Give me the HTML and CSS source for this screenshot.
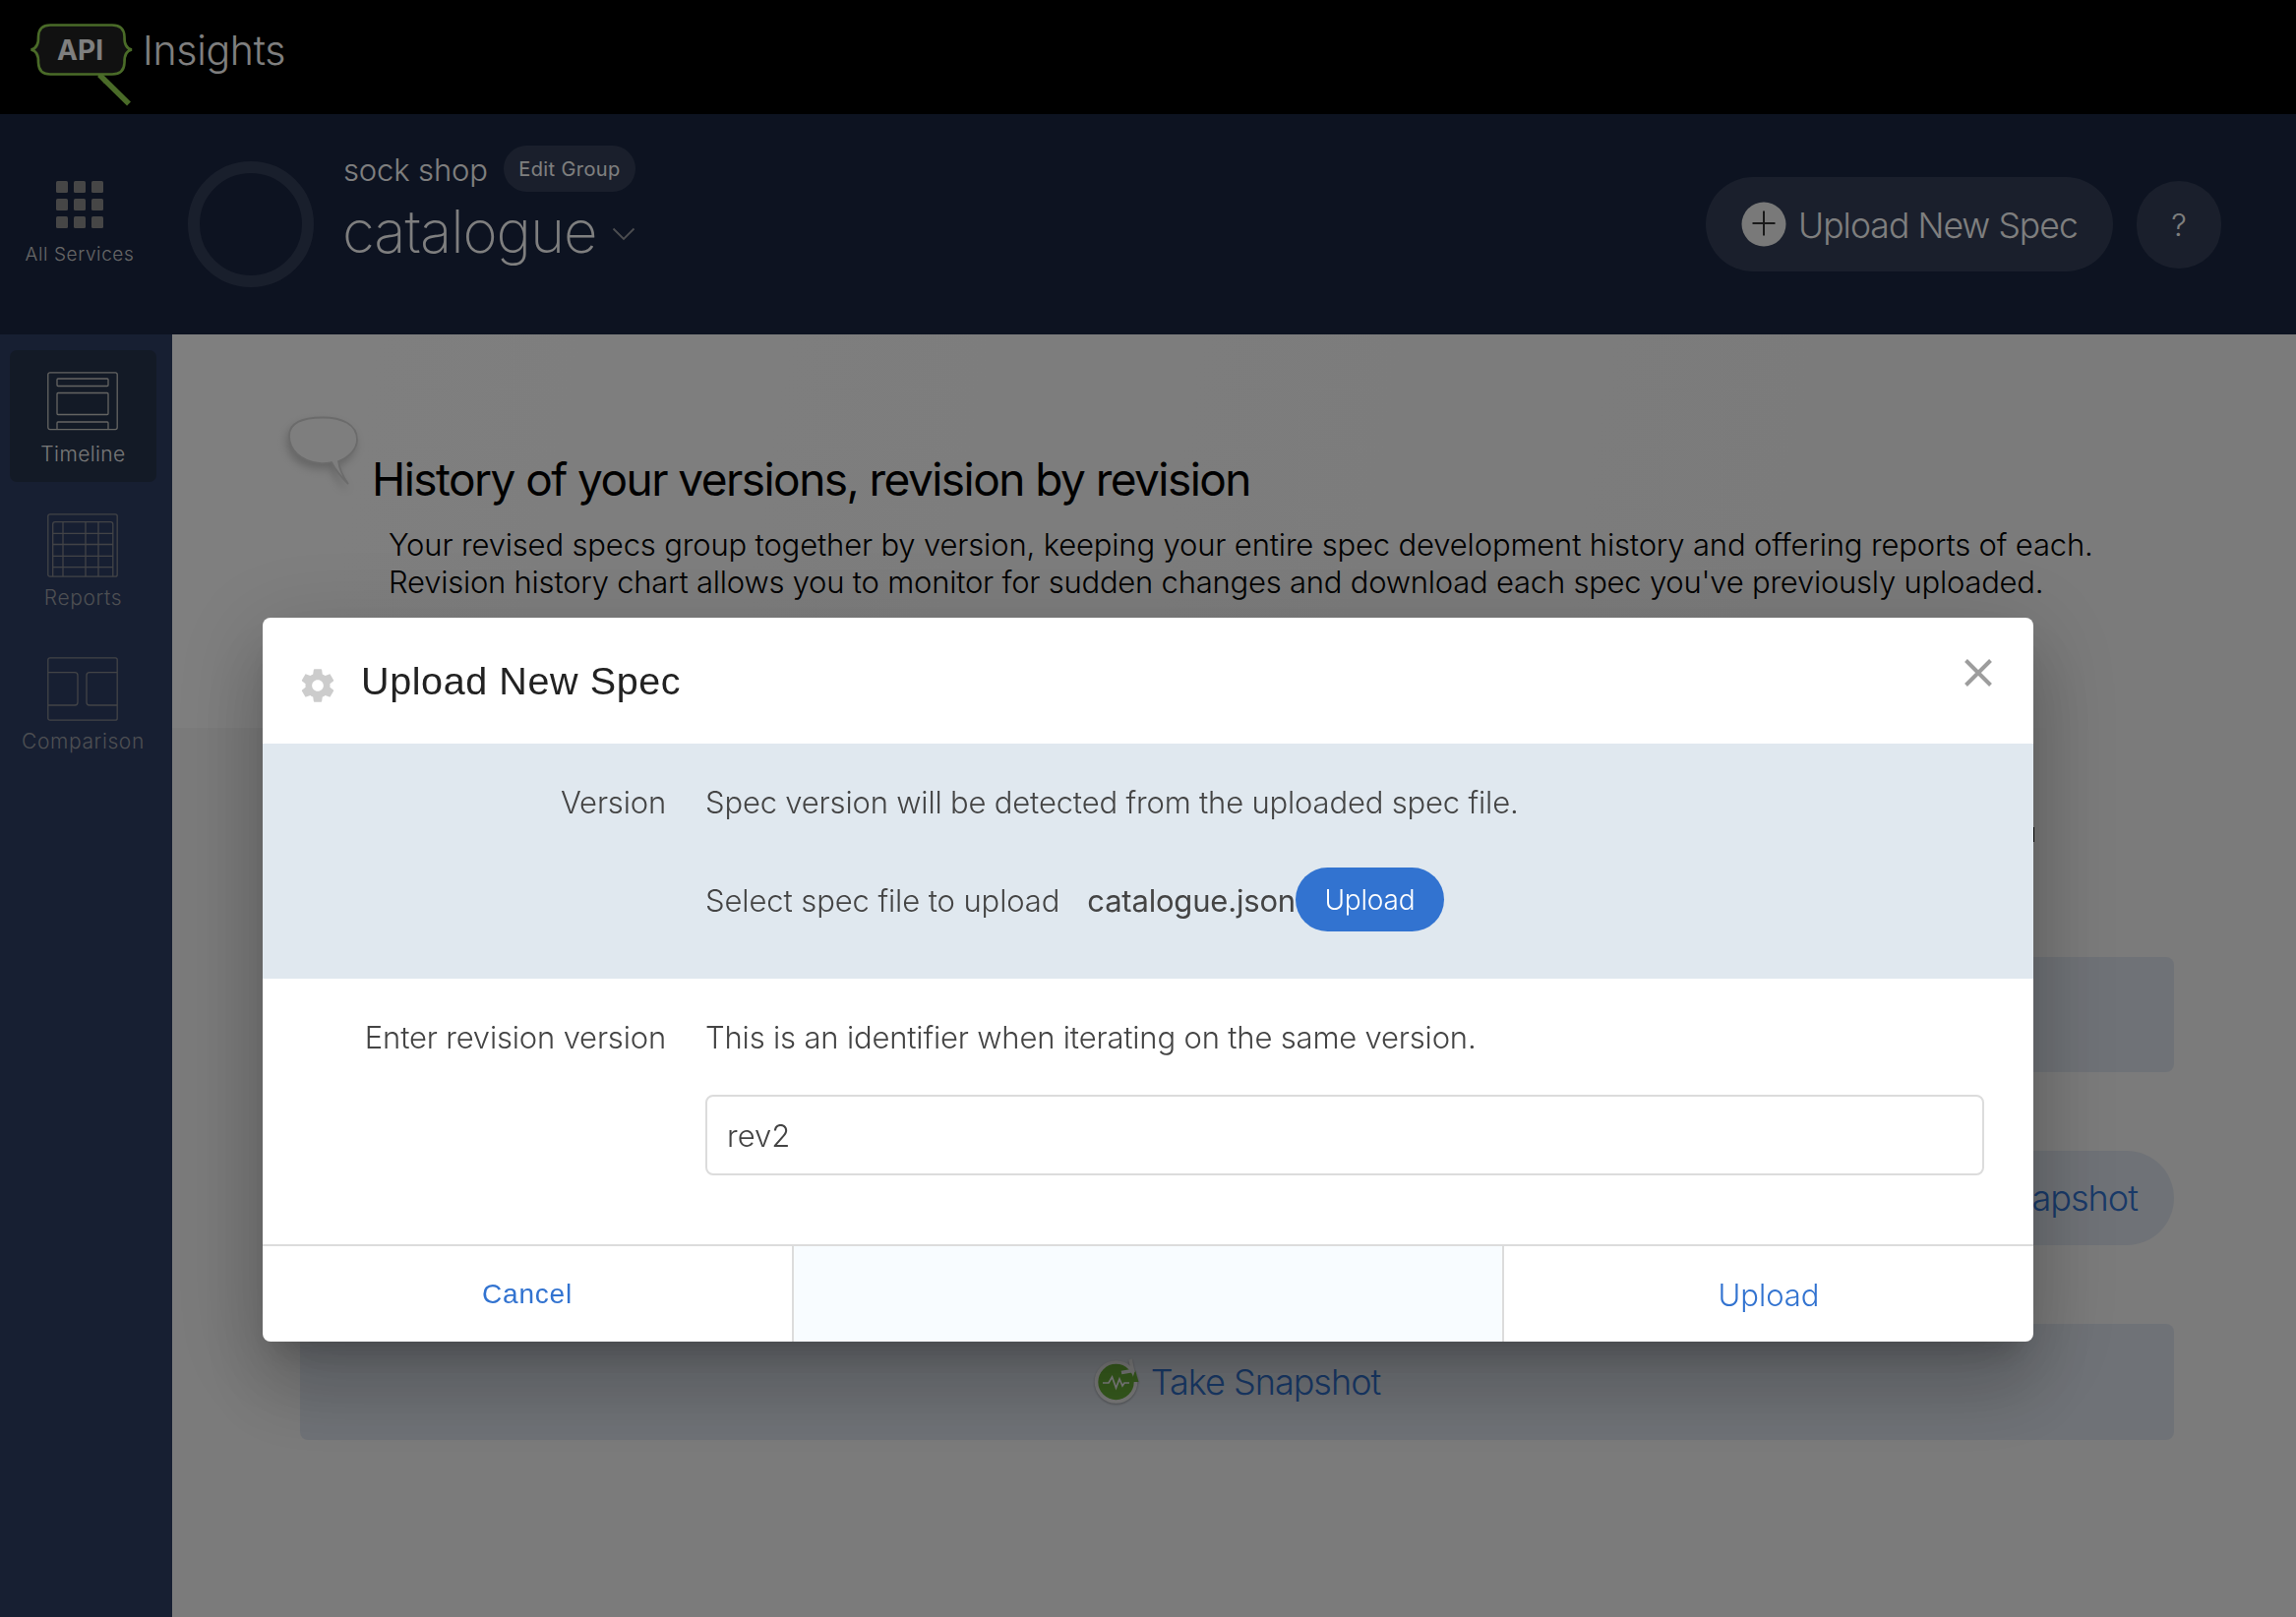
FILE: index.html
```html
<!DOCTYPE html>
<html lang="en">
<head>
<meta charset="utf-8">
<title>API Insights</title>
<link rel="stylesheet" href="styles.css">
</head>
<body>
<div class="app">
  <header class="topbar">
    <svg class="logo" width="106" height="86" viewBox="0 0 106 86">
      <path d="M71 52 L101 81.500" stroke="#94d750" stroke-width="5.500" fill="none"/>
      <path d="M68 50 L79 58 L76 61 Z" fill="#94d750"/>
      <path d="M21 1.500 H84 Q96 1.500 96.500 13 Q96 25 104 26.500 Q96 28 96.500 40 Q96 51.500 84 51.500 H21 Q9.500 51.500 9 40 Q9.500 28 1.500 26.500 Q9.500 25 9 13 Q9.500 1.500 21 1.500 Z" fill="#232323" stroke="#94d750" stroke-width="2.600"/>
      <text class="logo-api" x="28" y="36.500" textLength="47">API</text>
    </svg>
    <span class="brand">Insights</span>
  </header>

  <div class="service-bar">
    <a class="all-services">
      <span class="grid-icon"><i></i><i></i><i></i><i></i><i></i><i></i><i></i><i></i><i></i></span>
      <span class="all-label">All Services</span>
    </a>
    <div class="ring"></div>
    <div class="service-names">
      <div class="group-row"><span class="group-name">sock shop</span><button class="edit-group">Edit Group</button></div>
      <div class="service-row"><span class="service-name">catalogue</span>
        <svg class="chevron" width="24" height="14" viewBox="0 0 24 14"><path d="M1.500 1.500 L12 12 L22.500 1.500" fill="none" stroke="#989ba1" stroke-width="1.800"/></svg>
      </div>
    </div>
    <div class="actions">
      <button class="upload-spec">
        <svg width="46" height="46" viewBox="0 0 46 46"><circle cx="23" cy="23" r="22.500" fill="#f2f2f2"/><path d="M11.500 22 H34.500 M23 9.500 V34.500" stroke="#333" stroke-width="2" fill="none"/></svg>
        <span class="upload-spec-text">Upload New Spec</span>
      </button>
      <button class="help">?</button>
    </div>
  </div>

  <div class="body">
    <nav class="sidebar">
      <a class="nav-item active">
        <svg width="72" height="60" viewBox="0 0 72 60" fill="none" stroke="#c9c8c4" stroke-width="1.300"><rect x=".8" y=".8" width="70.400" height="57.800" rx="2"/><rect x="10" y="7" width="52" height="7.500" rx="1"/><rect x="10" y="21.500" width="52" height="22" rx="1"/><path d="M10 58.500 V52 Q10 51 11 51 H61 Q62 51 62 52 V58.500"/></svg>
        <span class="nav-label">Timeline</span>
      </a>
      <a class="nav-item reports">
        <svg width="72" height="65" viewBox="0 0 72 65" fill="none" stroke="#84878d" stroke-width="1.300"><rect x=".8" y=".8" width="70.400" height="63.400" rx="2"/><path d="M5.700 64 V11 Q5.700 8.700 8 8.700 H64.500 Q66.800 8.700 66.800 11 V64 M16 8.700 V64 M39 8.700 V64 M52 8.700 V64 M5.700 20.300 H66.800 M5.700 31.500 H66.800 M5.700 43.300 H66.800 M5.700 54.700 H66.800"/></svg>
        <span class="nav-label">Reports</span>
      </a>
      <a class="nav-item comparison">
        <svg width="72" height="65" viewBox="0 0 72 65" fill="none" stroke="#84878d" stroke-width="1.300"><rect x=".8" y=".8" width="70.400" height="63.400" rx="2"/><path d="M1 15.700 H28 Q31 15.700 31 18.700 V46 Q31 49 28 49 H1 M71 15.700 H43 Q40 15.700 40 18.700 V46 Q40 49 43 49 H71"/></svg>
        <span class="nav-label">Comparison</span>
      </a>
    </nav>
    <main class="content">
      <section class="intro">
        <svg class="bubble" width="76" height="76" viewBox="0 0 76 76"><path d="M37 1.500 C56 1.500 72 8 72 24 C72 34 63 42 53 46 C54 54 58 62 63 69 C56 62 50 55 46 47 C42 48 38 48.500 34 48 C14 46 3 34 3 20 C3 7 16 1.500 37 1.500 Z" fill="#fdfdfd" stroke="#d6d6d6" stroke-width="1.800"/></svg>
        <div class="intro-text">
          <h1>History of your versions, revision by revision</h1>
          <p><span class="intro-line">Your revised specs group together by version, keeping your entire spec development history and offering reports of each.</span><br><span class="intro-line tight">Revision history chart allows you to monitor for sudden changes and download each spec you've previously uploaded.</span></p>
        </div>
      </section>
      <section class="revisions">
        <div class="chart-edge"></div>
        <div class="band"></div>
        <button class="snapshot-pill">Take Snapshot</button>
        <div class="band band-snapshot">
          <svg width="46" height="50" viewBox="0 0 46 50"><circle cx="22.500" cy="27" r="20" fill="#6db53a" stroke="#f4f4f4" stroke-width="3.600"/><path d="M42 15 L45.500 27 L38 27 Z" fill="#6db53a"/><path d="M28 17.500 L39.500 15.500 L37 4" fill="none" stroke="#f4f4f4" stroke-width="3.600"/><path d="M9 28 H15 L18.500 22 L22.500 33 L26 24 L29 31 L31 28 H36" fill="none" stroke="#fff" stroke-width="1.700"/></svg>
          <span>Take Snapshot</span>
        </div>
      </section>
    </main>
  </div>
</div>

<div class="overlay">
  <div class="modal">
    <div class="modal-head">
      <svg class="gear" width="40" height="40" viewBox="0 0 24 24"><path fill="#ccc" d="M19.430 12.980c.04-.32.070-.64.070-.98s-.03-.66-.07-.98l2.110-1.650c.19-.15.240-.42.120-.64l-2-3.460c-.12-.22-.39-.3-.61-.22l-2.490 1c-.52-.4-1.080-.73-1.690-.98l-.38-2.650C14.460 2.180 14.250 2 14 2h-4c-.25 0-.46.180-.49.420l-.38 2.650c-.61.250-1.170.590-1.690.980l-2.490-1c-.23-.09-.49 0-.61.220l-2 3.460c-.13.220-.07.490.120.640l2.110 1.650c-.04.320-.07.650-.07.980s.030.660.070.980l-2.110 1.650c-.19.150-.24.420-.12.640l2 3.460c.12.220.39.300.61.220l2.490-1c.52.400 1.080.730 1.690.980l.38 2.650c.03.240.240.420.49.420h4c.25 0 .46-.18.490-.42l.38-2.650c.61-.25 1.170-.59 1.690-.98l2.490 1c.23.090.49 0 .61-.22l2-3.460c.12-.22.070-.49-.12-.64l-2.110-1.650zM12 15.500c-1.930 0-3.500-1.570-3.500-3.500s1.570-3.500 3.500-3.500 3.500 1.570 3.500 3.500-1.570 3.500-3.500 3.500z"/></svg>
      <h2>Upload New Spec</h2>
      <svg class="close" width="28" height="28" viewBox="0 0 28 28"><path d="M1.500 1.500 L26.500 26.500 M26.500 1.500 L1.500 26.500" stroke="#9d9d9d" stroke-width="4" fill="none"/></svg>
    </div>
    <div class="field field-version">
      <label>Version</label>
      <div class="field-body">
        <p>Spec version will be detected from the uploaded spec file.</p>
        <div class="file-row"><span class="file-prompt">Select spec file to upload</span><span class="file-name">catalogue.json</span><button class="pick">Upload</button></div>
      </div>
    </div>
    <div class="field field-revision">
      <label>Enter revision version</label>
      <div class="field-body">
        <p>This is an identifier when iterating on the same version.</p>
        <div class="input">rev2</div>
      </div>
    </div>
    <div class="modal-foot">
      <button class="cancel">Cancel</button>
      <div class="foot-space"></div>
      <button class="submit">Upload</button>
    </div>
  </div>
</div>
</body>
</html>
```
FILE: styles.css
```css
* { box-sizing: border-box; }
body { margin: 0; background: #fff; font-family: Inter, "Liberation Sans", sans-serif; font-weight: 300; width: 2334px; height: 1644px; overflow: hidden; }
button { border: 0; padding: 0; background: none; font: inherit; color: inherit; letter-spacing: inherit; }
h1, h2, p { margin: 0; font-weight: inherit; white-space: nowrap; }
span { white-space: nowrap; }
svg { display: block; flex: none; }

.app { width: 2334px; height: 1644px; display: flex; flex-direction: column; }

.topbar { height: 116px; background: #000; display: flex; padding-left: 30px; }
.logo { margin-top: 24px; }
.logo-api { font: 700 28px Inter, sans-serif; fill: #fff; }
.brand { margin: 26px 0 0 9px; font-size: 41px; line-height: 50px; letter-spacing: -.3px; color: #fff; }

.service-bar { height: 224px; background: #1a2642; display: flex; color: #fff; }
.all-services { width: 162px; padding-top: 68px; display: flex; flex-direction: column; align-items: center; gap: 15px; }
.grid-icon { display: grid; grid-template-columns: repeat(3, 12px); gap: 6px; }
.grid-icon i { height: 12px; border-radius: 1.500px; background: #8c8c8c; }
.all-label { font-size: 19px; line-height: 24px; letter-spacing: .6px; color: #cfcfcf; }
.ring { width: 128px; height: 128px; margin: 48px 0 0 29px; border: 12px solid #333e58; border-radius: 50%; }
.service-names { margin: 32px 0 0 29px; }
.group-row { display: flex; height: 47px; }
.group-name { width: 148px; padding-left: 1px; font-size: 31px; line-height: 49px; letter-spacing: -.15px; }
.edit-group { width: 134px; height: 47px; border-radius: 24px; background: #343f58; margin-left: 16px; font-size: 20px; font-weight: 400; letter-spacing: .4px; }
.service-row { display: flex; margin-top: 4px; }
.service-name { font-size: 60px; line-height: 72px; font-weight: 200; letter-spacing: -1.100px; }
.chevron { margin: 32px 0 0 15px; }
.actions { margin: 64px 76px 0 auto; display: flex; gap: 24px; }
.upload-spec { width: 414px; height: 96px; border-radius: 48px; background: #343f58; display: flex; align-items: center; padding-left: 36px; gap: 12px; font-size: 35.500px; letter-spacing: -.95px; }
.upload-spec-text { padding-top: 2px; }
.help { width: 86px; height: 89px; margin-top: 4px; border-radius: 43px; background: #343f58; font-size: 31px; }

.body { flex: 1; display: flex; }
.sidebar { width: 175px; background: #2f3e64; padding: 16px 16px 0 10px; }
.nav-item { display: flex; flex-direction: column; align-items: center; color: #9b9fa6; }
.nav-item svg { margin-right: 2px; }
.nav-item.active { height: 134px; padding-top: 22px; gap: 11px; border-radius: 7px; background: #26344d; color: #f0f0f0; }
.reports { margin-top: 32px; gap: 8px; }
.comparison { margin-top: 47px; gap: 8px; }
.nav-label { font-size: 21px; line-height: 26px; letter-spacing: .6px; }
.active .nav-label { letter-spacing: .4px; }

.content { flex: 1; display: flex; flex-direction: column; color: #000; }
.intro { height: 400px; display: flex; padding: 83px 0 0 116px; background: linear-gradient(100deg, #fff, #f7f7f7 75%); }
.bubble { filter: drop-shadow(-2px 5px 4px rgba(0, 0, 0, .2)); }
.intro-text { margin: 36px 0 0 11px; }
h1 { font-size: 46px; line-height: 56px; font-weight: 400; letter-spacing: -1.550px; }
.intro-text p { margin: 20px 0 0 17px; font-size: 31px; line-height: 38px; }
.intro-line { letter-spacing: -.16px; }
.intro-line.tight { letter-spacing: -.23px; }
.revisions { flex: 1; padding: 0 124px 0 130px; background: #f6f6f6; display: flex; flex-direction: column; }
.chart-edge { height: 15px; margin: 101px 142px 117px auto; width: 15px; background: #000; }
.band { height: 117px; border-radius: 8px; background: #dfe5ee; }
.snapshot-pill { width: 360px; height: 96px; margin: 80px 0 80px auto; padding-right: 37px; border-radius: 48px; background: #dfe5ee; text-align: right; font-size: 36px; letter-spacing: -.95px; color: #3273d0; }
.band-snapshot { height: 118px; display: flex; justify-content: center; align-items: center; gap: 12px; font-size: 36px; letter-spacing: -1px; color: #3273d0; }
.band-snapshot svg { margin-bottom: 5px; filter: drop-shadow(0 1px 1px rgba(0, 0, 0, .3)); }

.overlay { position: fixed; inset: 0; background: rgba(0, 0, 0, .5); padding-top: 628px; }
.modal { width: 1800px; margin: 0 auto; border-radius: 8px; background: #fff; overflow: hidden; box-shadow: 0 22px 30px -14px rgba(0, 0, 0, .2), 0 48px 76px 6px rgba(0, 0, 0, .14), 0 18px 92px 16px rgba(0, 0, 0, .12); color: #444; }
.modal-head { height: 128px; display: flex; padding: 40px 42px 0 36px; color: #222; }
.gear { margin-top: 9px; }
h2 { margin-left: 24px; font: 400 39.500px/48px "Liberation Sans", sans-serif; letter-spacing: .6px; }
.close { margin: 2px 0 0 auto; }
.field { display: grid; grid-template-columns: 410px 1300px; column-gap: 40px; padding-top: 40px; font-size: 31px; line-height: 40px; letter-spacing: -.18px; }
.field label { text-align: right; }
.field-version { height: 239px; background: #e0e8ef; }
.field-revision { height: 270px; }
.file-row { display: flex; margin-top: 46px; line-height: 67px; }
.file-prompt { letter-spacing: -.11px; }
.file-name { font-weight: 400; margin-left: 28px; letter-spacing: -.2px; }
.pick { width: 151px; height: 65px; padding-top: 1px; border-radius: 33px; background: #3273d0; color: #fff; font-size: 28px; line-height: 65px; }
.input { margin-top: 38px; height: 82px; border: 2px solid #dcdcdc; border-radius: 8px; padding-left: 20px; line-height: 80px; letter-spacing: 0; }
.modal-foot { height: 99px; border-top: 2px solid #dcdcdc; display: grid; grid-template-columns: 538px 724px 538px; color: #3273d0; }
.foot-space { background: #f8fcff; border: solid #dcdcdc; border-width: 0 2px; }
.cancel { font: 400 28px "Liberation Sans", sans-serif; letter-spacing: .8px; }
.submit { padding-top: 2px; font-size: 31px; }
```
